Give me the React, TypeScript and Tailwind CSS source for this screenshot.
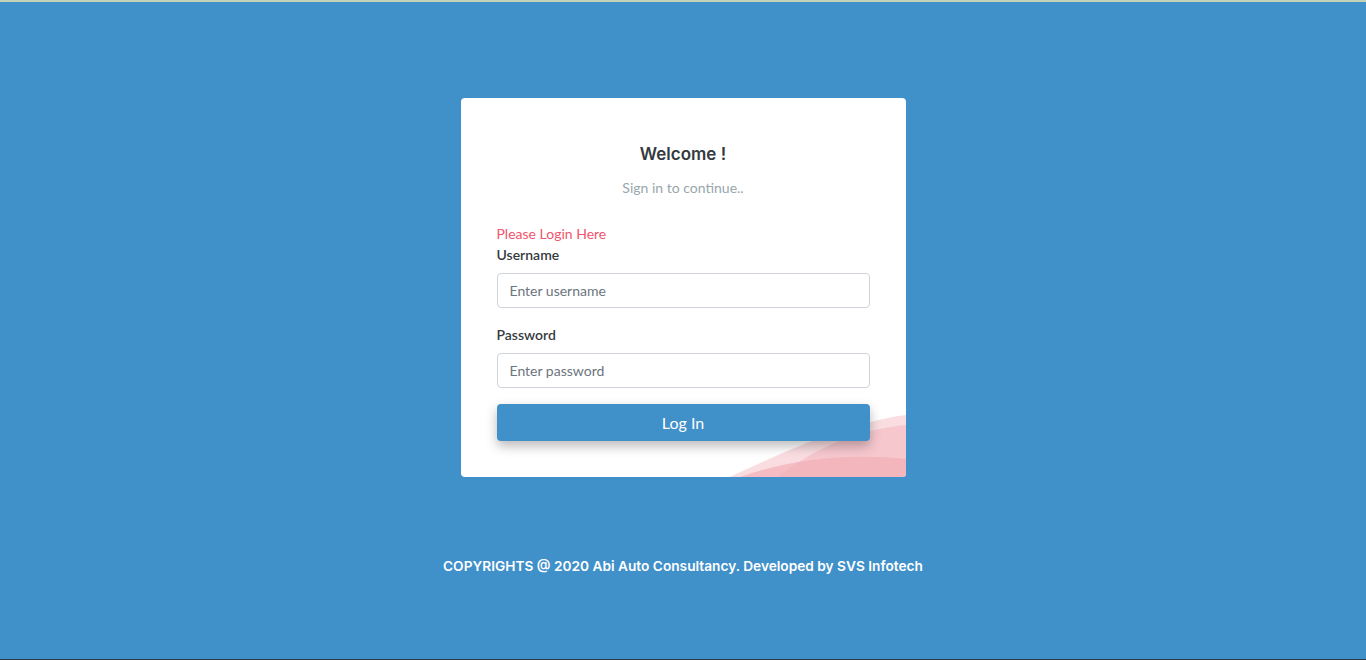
import { useState } from "react";

function CornerWave() {
  return (
    <svg
      className="absolute bottom-0 right-0 pointer-events-none"
      width="180"
      height="64"
      viewBox="0 0 180 64"
      preserveAspectRatio="none"
    >
      <path d="M4 64 C 60 38, 120 10, 180 2 L180 64 Z" fill="#f9dde1" />
      <path d="M52 64 C 88 34, 136 16, 180 12 L180 64 Z" fill="#f6c4ca" opacity="0.85" />
      <path d="M14 64 C 64 46, 124 40, 180 46 L180 64 Z" fill="#f3aeb6" opacity="0.7" />
    </svg>
  );
}

export default function App() {
  const [username, setUsername] = useState("");
  const [password, setPassword] = useState("");

  return (
    <div
      className="min-h-[660px] bg-[#4090ca] flex flex-col items-center border-t-2 border-[#c3d3b8] border-b border-b-[#2a3a44]"
      style={{ fontFamily: "Lato, 'Noto Sans', sans-serif" }}
    >
      {/* Card */}
      <div className="relative mt-[96px] w-[445px] bg-white rounded-[4px] overflow-hidden px-9 pt-[44px] pb-9">
        <CornerWave />

        <div className="relative">
          <div className="text-center">
            <h4
              className="text-[17px] font-semibold text-[#343a40] leading-[24px]"
              style={{ fontFamily: "Inter, Roboto, sans-serif" }}
            >
              Welcome !
            </h4>
            <p className="mt-[12px] text-[14px] text-[#98a6ad] leading-[20px]">
              Sign in to continue..
            </p>
          </div>

          <form className="mt-[26px]" onSubmit={(e) => e.preventDefault()}>
            <p className="text-[14px] text-[#f1556c] leading-[20px]">Please Login Here</p>

            <label className="block mt-[1px] text-[14px] font-semibold text-[#343a40] leading-[20px]">
              Username
            </label>
            <input
              value={username}
              onChange={(e) => setUsername(e.target.value)}
              placeholder="Enter username"
              className="mt-[8px] block w-full h-[35px] px-3 text-[14px] text-[#495057] placeholder:text-[#6c757d] border border-[#ced4da] rounded-[4px] outline-none"
            />

            <label className="block mt-[17px] text-[14px] font-semibold text-[#343a40] leading-[20px]">
              Password
            </label>
            <input
              type="password"
              value={password}
              onChange={(e) => setPassword(e.target.value)}
              placeholder="Enter password"
              className="mt-[8px] block w-full h-[35px] px-3 text-[14px] text-[#495057] placeholder:text-[#6c757d] border border-[#ced4da] rounded-[4px] outline-none"
            />

            <button
              type="submit"
              className="mt-[16px] block w-full h-[37px] bg-[#4090ca] text-white text-[16px] rounded-[4px] shadow-[0_5px_12px_rgba(0,0,0,0.28)]"
            >
              Log In
            </button>
          </form>
        </div>
      </div>

      {/* Footer */}
      <p
        className="mt-[79px] text-[13.7px] font-semibold text-white leading-[21px]"
        style={{ fontFamily: "Inter, Roboto, sans-serif" }}
      >
        COPYRIGHTS @ 2020 Abi Auto Consultancy. Developed by SVS Infotech
      </p>
    </div>
  );
}
